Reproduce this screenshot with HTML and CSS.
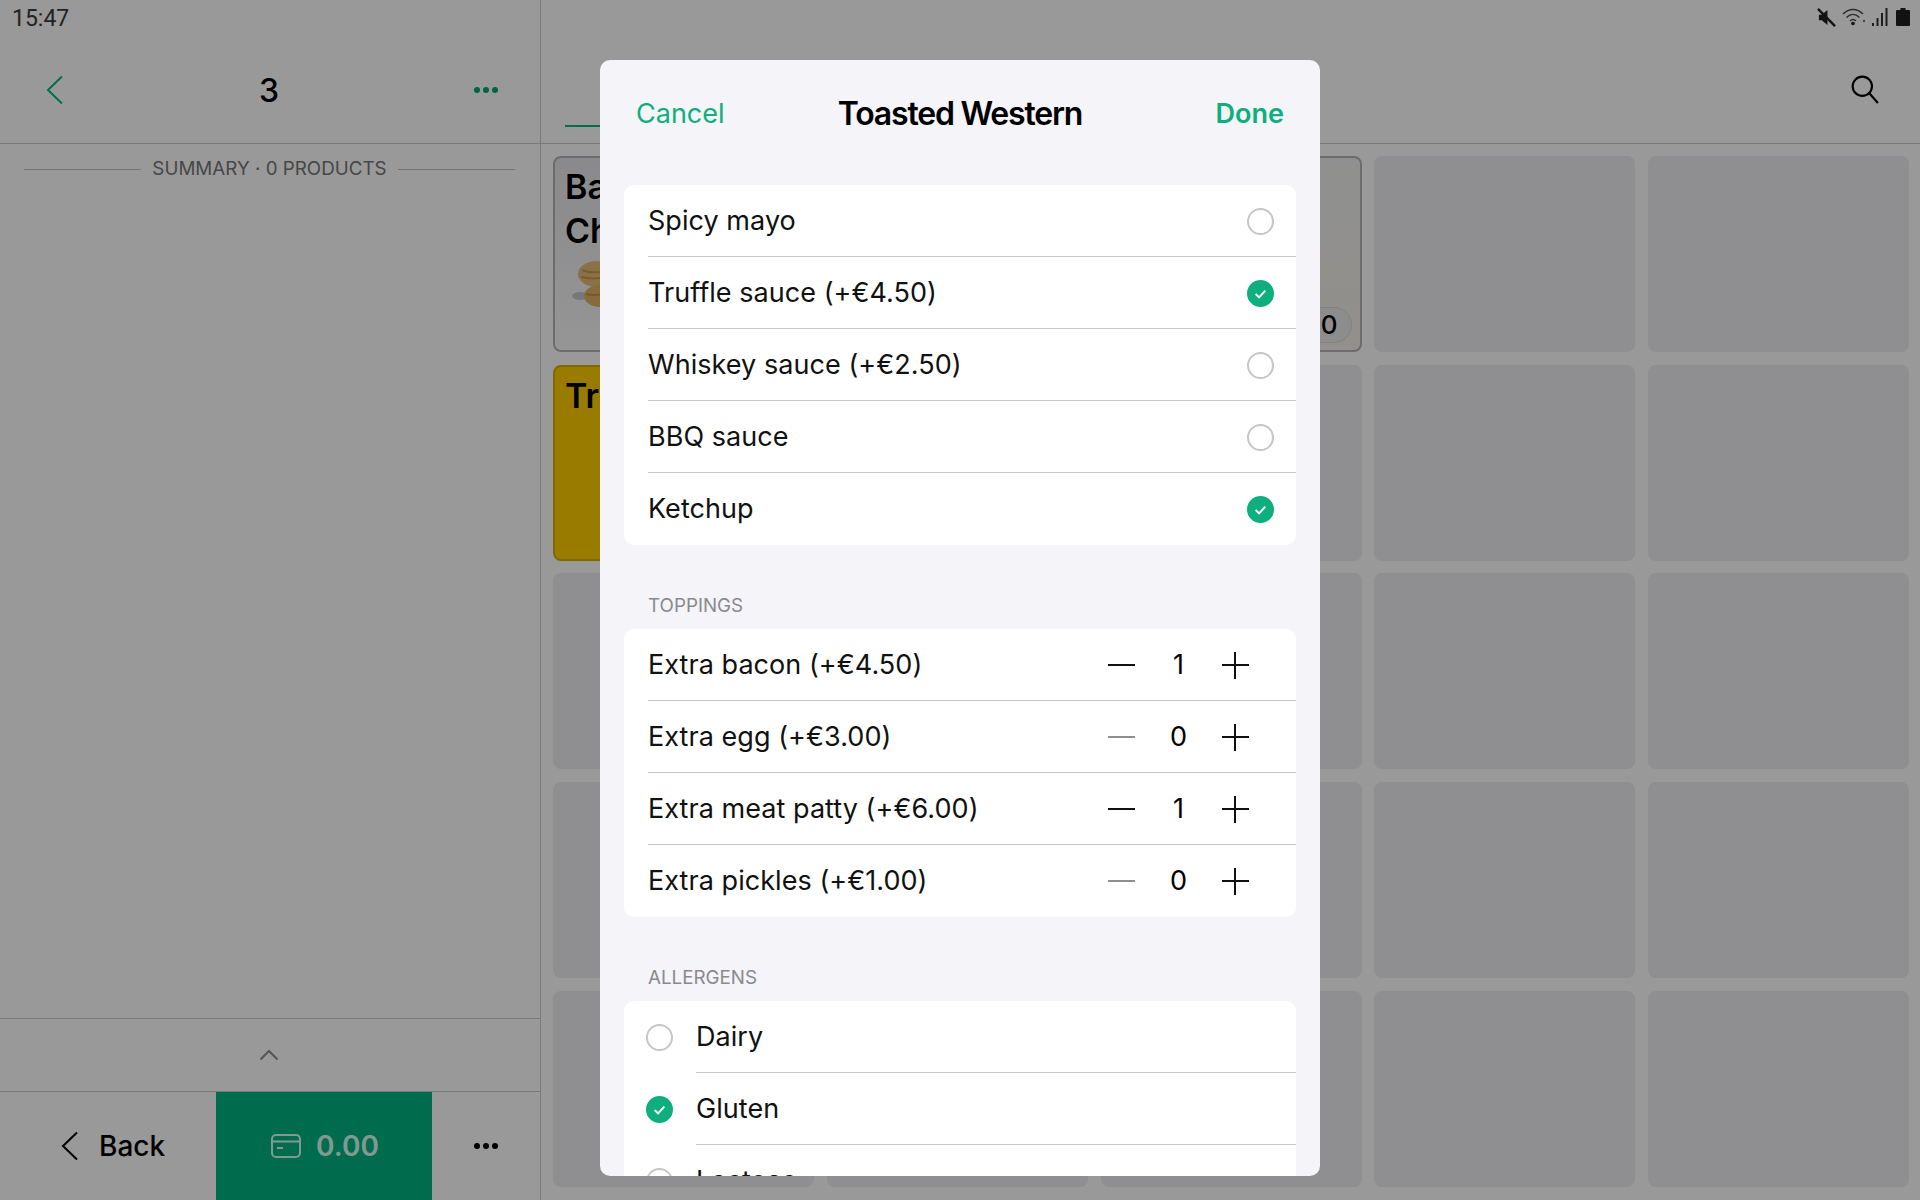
FILE: index.html
```html
<!DOCTYPE html>
<html lang="en">
<head>
<meta charset="utf-8">
<title>Toasted Western</title>
<link rel="stylesheet" href="styles.css">
</head>
<body>
<div class="app">
  <aside class="side">
    <div class="status"><span class="time">15:47</span></div>
    <header class="side-head">
      <svg class="chev" viewBox="0 0 18 30"><path d="M16 1.500 2 15l14 13.500"/></svg>
      <span class="order-no">3</span>
      <span class="dots green"><i></i><i></i><i></i></span>
    </header>
    <div class="summary"><span class="rule"></span><span class="summary-text">SUMMARY · 0 PRODUCTS</span><span class="rule"></span></div>
    <div class="side-fill"></div>
    <div class="expander"><svg class="up" viewBox="0 0 20 12"><path d="M1.500 10.500 10 2l8.500 8.500"/></svg></div>
    <div class="actions">
      <div class="back">
        <svg class="chev black" viewBox="0 0 18 30"><path d="M16 1.500 2 15l14 13.500"/></svg>
        <span>Back</span>
      </div>
      <div class="pay">
        <svg class="card-ic" viewBox="0 0 30 24"><rect x="1" y="1" width="28" height="22" rx="4"/><path d="M1 7.500h28M6 14h6"/></svg>
        <span>0.00</span>
      </div>
      <div class="more"><span class="dots"><i></i><i></i><i></i></span></div>
    </div>
  </aside>
  <main class="catalog">
    <div class="status icons">
      <svg class="st mute" viewBox="0 0 20 20"><path d="M2 7h3l6-5v16l-6-5H2z"/><path class="cut" d="M1 1l18 18"/></svg>
      <svg class="st wifi" viewBox="0 0 24 18"><path class="arc" d="M1 6c6-6 14-6 20 0M4.500 9.500c4-4 9-4 13 0M8 13c2-2 4-2 6 0"/><circle cx="11" cy="15.500" r="1.800"/><circle class="dot" cx="22" cy="13" r="1.200"/></svg>
      <svg class="st signal" viewBox="0 0 16 18"><rect x="0" y="15" width="2" height="3"/><rect x="4.500" y="10" width="2" height="8"/><rect x="9" y="5" width="2" height="13"/><rect x="13.500" y="0" width="2" height="18"/></svg>
      <svg class="st batt" viewBox="0 0 14 18"><path d="M4.500 0h5v2H13a1 1 0 0 1 1 1v14a1 1 0 0 1-1 1H1a1 1 0 0 1-1-1V3a1 1 0 0 1 1-1h3.500z"/></svg>
    </div>
    <header class="cat-head">
      <span class="tab"></span>
      <svg class="search" viewBox="0 0 26 27"><circle cx="10.500" cy="10.500" r="9"/><path d="m17 17 8 9"/></svg>
    </header>
    <div class="grid">
      <div class="tile product"><span class="tile-name">Ba<br>Ch</span>
        <svg class="bun" viewBox="0 0 40 50"><ellipse cx="8" cy="36" rx="8" ry="4" fill="#c9c9cf"/><ellipse cx="25" cy="14" rx="19" ry="13" fill="#e6bd75"/><path d="M10 10c6 3 14 3 26 1M9 17c8 2 16 2 27 0" stroke="#c99a4e" stroke-width="2" fill="none"/><ellipse cx="28" cy="36" rx="16" ry="11" fill="#e0b266"/><path d="M14 34c8 2 16 1 28-1" stroke="#c2924a" stroke-width="2" fill="none"/></svg>
      </div>
      <div class="tile"></div>
      <div class="tile product fade"><span class="count">0</span></div>
      <div class="tile"></div><div class="tile"></div>
      <div class="tile yellow"><span class="tile-name">Tr</span></div>
      <div class="tile"></div><div class="tile"></div><div class="tile"></div><div class="tile"></div>
      <div class="tile"></div><div class="tile"></div><div class="tile"></div><div class="tile"></div><div class="tile"></div>
      <div class="tile"></div><div class="tile"></div><div class="tile"></div><div class="tile"></div><div class="tile"></div>
      <div class="tile"></div><div class="tile"></div><div class="tile"></div><div class="tile"></div><div class="tile"></div>
    </div>
  </main>
  <div class="scrim"></div>
  <section class="modal">
    <header class="modal-head">
      <span class="link">Cancel</span>
      <h1 class="modal-title">Toasted Western</h1>
      <span class="link strong">Done</span>
    </header>
    <div class="group">
      <div class="row"><span class="label">Spicy mayo</span><span class="radio"></span></div>
      <div class="row"><span class="label">Truffle sauce (+€4.50)</span><span class="radio on"><svg viewBox="0 0 28 28"><path d="m9 14.500 3.500 3.500L19 11"/></svg></span></div>
      <div class="row"><span class="label">Whiskey sauce (+€2.50)</span><span class="radio"></span></div>
      <div class="row"><span class="label">BBQ sauce</span><span class="radio"></span></div>
      <div class="row"><span class="label">Ketchup</span><span class="radio on"><svg viewBox="0 0 28 28"><path d="m9 14.500 3.500 3.500L19 11"/></svg></span></div>
    </div>
    <div class="group-label">TOPPINGS</div>
    <div class="group">
      <div class="row"><span class="label">Extra bacon (+€4.50)</span><span class="stepper"><i class="minus"></i><b>1</b><i class="plus"></i></span></div>
      <div class="row"><span class="label">Extra egg (+€3.00)</span><span class="stepper"><i class="minus off"></i><b>0</b><i class="plus"></i></span></div>
      <div class="row"><span class="label">Extra meat patty (+€6.00)</span><span class="stepper"><i class="minus"></i><b>1</b><i class="plus"></i></span></div>
      <div class="row"><span class="label">Extra pickles (+€1.00)</span><span class="stepper"><i class="minus off"></i><b>0</b><i class="plus"></i></span></div>
    </div>
    <div class="group-label second">ALLERGENS</div>
    <div class="group lead">
      <div class="row"><span class="radio"></span><span class="label">Dairy</span></div>
      <div class="row"><span class="radio on"><svg viewBox="0 0 28 28"><path d="m9 14.500 3.500 3.500L19 11"/></svg></span><span class="label">Gluten</span></div>
      <div class="row"><span class="radio"></span><span class="label">Lactose</span></div>
    </div>
  </section>
</div>
</body>
</html>
```
FILE: styles.css
```css
* { box-sizing: border-box; }
html, body { margin: 0; height: 100%; }
body { font-family: Inter, "Liberation Sans", sans-serif; color: #000; background: #fff; }
.app { position: relative; display: flex; width: 1920px; height: 1200px; overflow: hidden; background: #fff; }

/* left pane */
.side { display: flex; flex-direction: column; width: 541px; flex: none; border-right: 1px solid #cbcbcb; }
.status { height: 36px; flex: none; }
.time { display: block; padding: 7px 0 0 12px; font: 400 23px/24px Roboto, sans-serif; color: #3a3a3a; }
.side-head { height: 108px; flex: none; display: flex; align-items: center; justify-content: space-between; padding: 0 42px 0 46px; border-bottom: 1px solid #cbcbcb; }
.chev { width: 18px; height: 30px; fill: none; stroke: #00b97f; stroke-width: 2; }
.chev.black { stroke: #000; }
.order-no { font-size: 32px; font-weight: 500; line-height: 40px; padding-top: 2px; }
.dots { display: flex; gap: 3px; width: 24px; }
.dots i { width: 6px; height: 6px; border-radius: 50%; background: #000; }
.dots.green i { background: #00a874; }
.summary { display: flex; align-items: center; gap: 11px; padding: 0 25px 0 24px; margin-top: 13px; height: 24px; }
.rule { flex: 1; height: 1px; background: #c4c4c4; }
.summary-text { font-size: 18.800px; line-height: 24px; color: #777; }
.side-fill { flex: 1; }
.expander { height: 74px; flex: none; display: flex; align-items: center; justify-content: center; padding-right: 2px; border-top: 1px solid #cbcbcb; border-bottom: 1px solid #cbcbcb; }
.up { width: 20px; height: 12px; fill: none; stroke: #8c8c8c; stroke-width: 2; }
.actions { height: 108px; flex: none; display: flex; }
.back { width: 216px; display: flex; align-items: center; gap: 20px; padding-left: 61px; font-size: 28px; font-weight: 500; }
.pay { width: 216px; padding-left: 2px; background: #00b583; display: flex; align-items: center; justify-content: center; gap: 15px; color: #d8fff0; font-size: 28px; font-weight: 600; }
.card-ic { width: 30px; height: 24px; fill: none; stroke: #d8fff0; stroke-width: 2; }
.more { flex: 1; display: flex; align-items: center; justify-content: center; }

/* catalog */
.catalog { flex: 1; display: flex; flex-direction: column; min-width: 0; }
.status.icons { display: flex; align-items: flex-start; justify-content: flex-end; padding: 8px 10px 0 0; gap: 6px; }
.st { fill: #1f1f1f; display: block; }
.mute { width: 19px; height: 19px; }
.mute .cut { fill: none; stroke: #1f1f1f; stroke-width: 2.500; }
.wifi { width: 24px; height: 18px; }
.wifi .arc { fill: none; stroke: #4a4a4a; stroke-width: 1.500; }
.wifi .dot { fill: #777; }
.signal { width: 16px; height: 18px; fill: #333; }
.batt { width: 14px; height: 18px; margin-left: 2px; }
.cat-head { height: 108px; flex: none; display: flex; align-items: center; justify-content: flex-end; padding-right: 41px; border-bottom: 1px solid #cbcbcb; position: relative; }
.tab { position: absolute; left: 24px; bottom: 16px; width: 60px; height: 2px; background: #00b97f; }
.search { width: 28px; height: 29px; fill: none; stroke: #000; stroke-width: 2; }
.grid { display: grid; grid-template-columns: repeat(5, 261px); grid-auto-rows: 196px; column-gap: 12.800px; row-gap: 12.700px; padding: 12px 0 0 12px; }
.tile { position: relative; border-radius: 8px; background: #eeeef2; overflow: hidden; }
.tile.product { background: linear-gradient(#e6e6ea, #fafafa); border: 2px solid #b4b4b8; }
.tile.fade { background: linear-gradient(#f0f0f0, #f3efe9); }
.tile.yellow { background: #ffce00; border: 2px solid #d9ae00; }
.tile-name { display: block; padding: 7px 0 0 10px; font-size: 34px; font-weight: 600; line-height: 44px; }
.bun { position: absolute; left: 17px; top: 102px; width: 40px; height: 50px; }
.count { position: absolute; right: 8px; bottom: 7px; width: 70px; height: 36px; border-radius: 18px; background: #ececec; border: 1px solid #d8d8d8; font-size: 26px; font-weight: 500; line-height: 34px; text-align: right; padding-right: 13px; }

.scrim { position: absolute; inset: 0; background: rgba(0,0,0,.4); }

/* modal */
.modal { position: absolute; left: 600px; top: 60px; width: 720px; height: 1116px; overflow: hidden; border-radius: 10px; background: #f4f4f9; padding: 0 24px; }
.modal-head { height: 125px; display: grid; grid-template-columns: 1fr auto 1fr; align-items: center; padding: 0 12px 17px; }
.modal-title { margin: 0; font-size: 32px; font-weight: 600; line-height: 40px; letter-spacing: -1.200px; }
.link { font-size: 27px; color: #0fae7e; line-height: 36px; }
.link.strong { font-weight: 600; text-align: right; }
.group { background: #fff; border-radius: 10px; overflow: hidden; padding-left: 24px; }
.row { height: 72px; display: flex; align-items: center; justify-content: space-between; padding-right: 22px; position: relative; }
.row + .row::before { content: ""; position: absolute; left: 0; right: 0; top: -1px; height: 1px; background: #c6c6c8; }
.label { font-size: 27px; line-height: 36px; color: #111; letter-spacing: .05px; }
.group-label { height: 84px; padding: 49px 0 0 24px; font-size: 18.800px; line-height: 24px; color: #8a8a8e; }
.radio { width: 27px; height: 27px; flex: none; border-radius: 50%; border: 2px solid #c6c6c8; background: #fff; display: block; }
.radio.on { border: 0; background: #0fae7e; }
.radio svg { display: block; width: 27px; height: 27px; fill: none; stroke: #fff; stroke-width: 2; }
.stepper { display: flex; align-items: center; margin-right: 25px; }
.stepper b { width: 87px; text-align: center; font-size: 27px; font-weight: 400; line-height: 36px; }
.minus, .plus { display: block; position: relative; width: 27px; height: 27px; }
.minus::before, .plus::before, .plus::after { content: ""; position: absolute; background: #111; }
.minus::before, .plus::before { left: 0; right: 0; top: 12px; height: 2px; }
.plus::after { top: 0; bottom: 0; left: 12px; width: 2px; }
.minus.off::before { background: #8e8e90; }
.group.lead { padding-left: 0; }
.group.lead .row { justify-content: flex-start; gap: 23px; padding-left: 22px; padding-right: 0; }
.group.lead .row + .row::before { left: 72px; }
```
